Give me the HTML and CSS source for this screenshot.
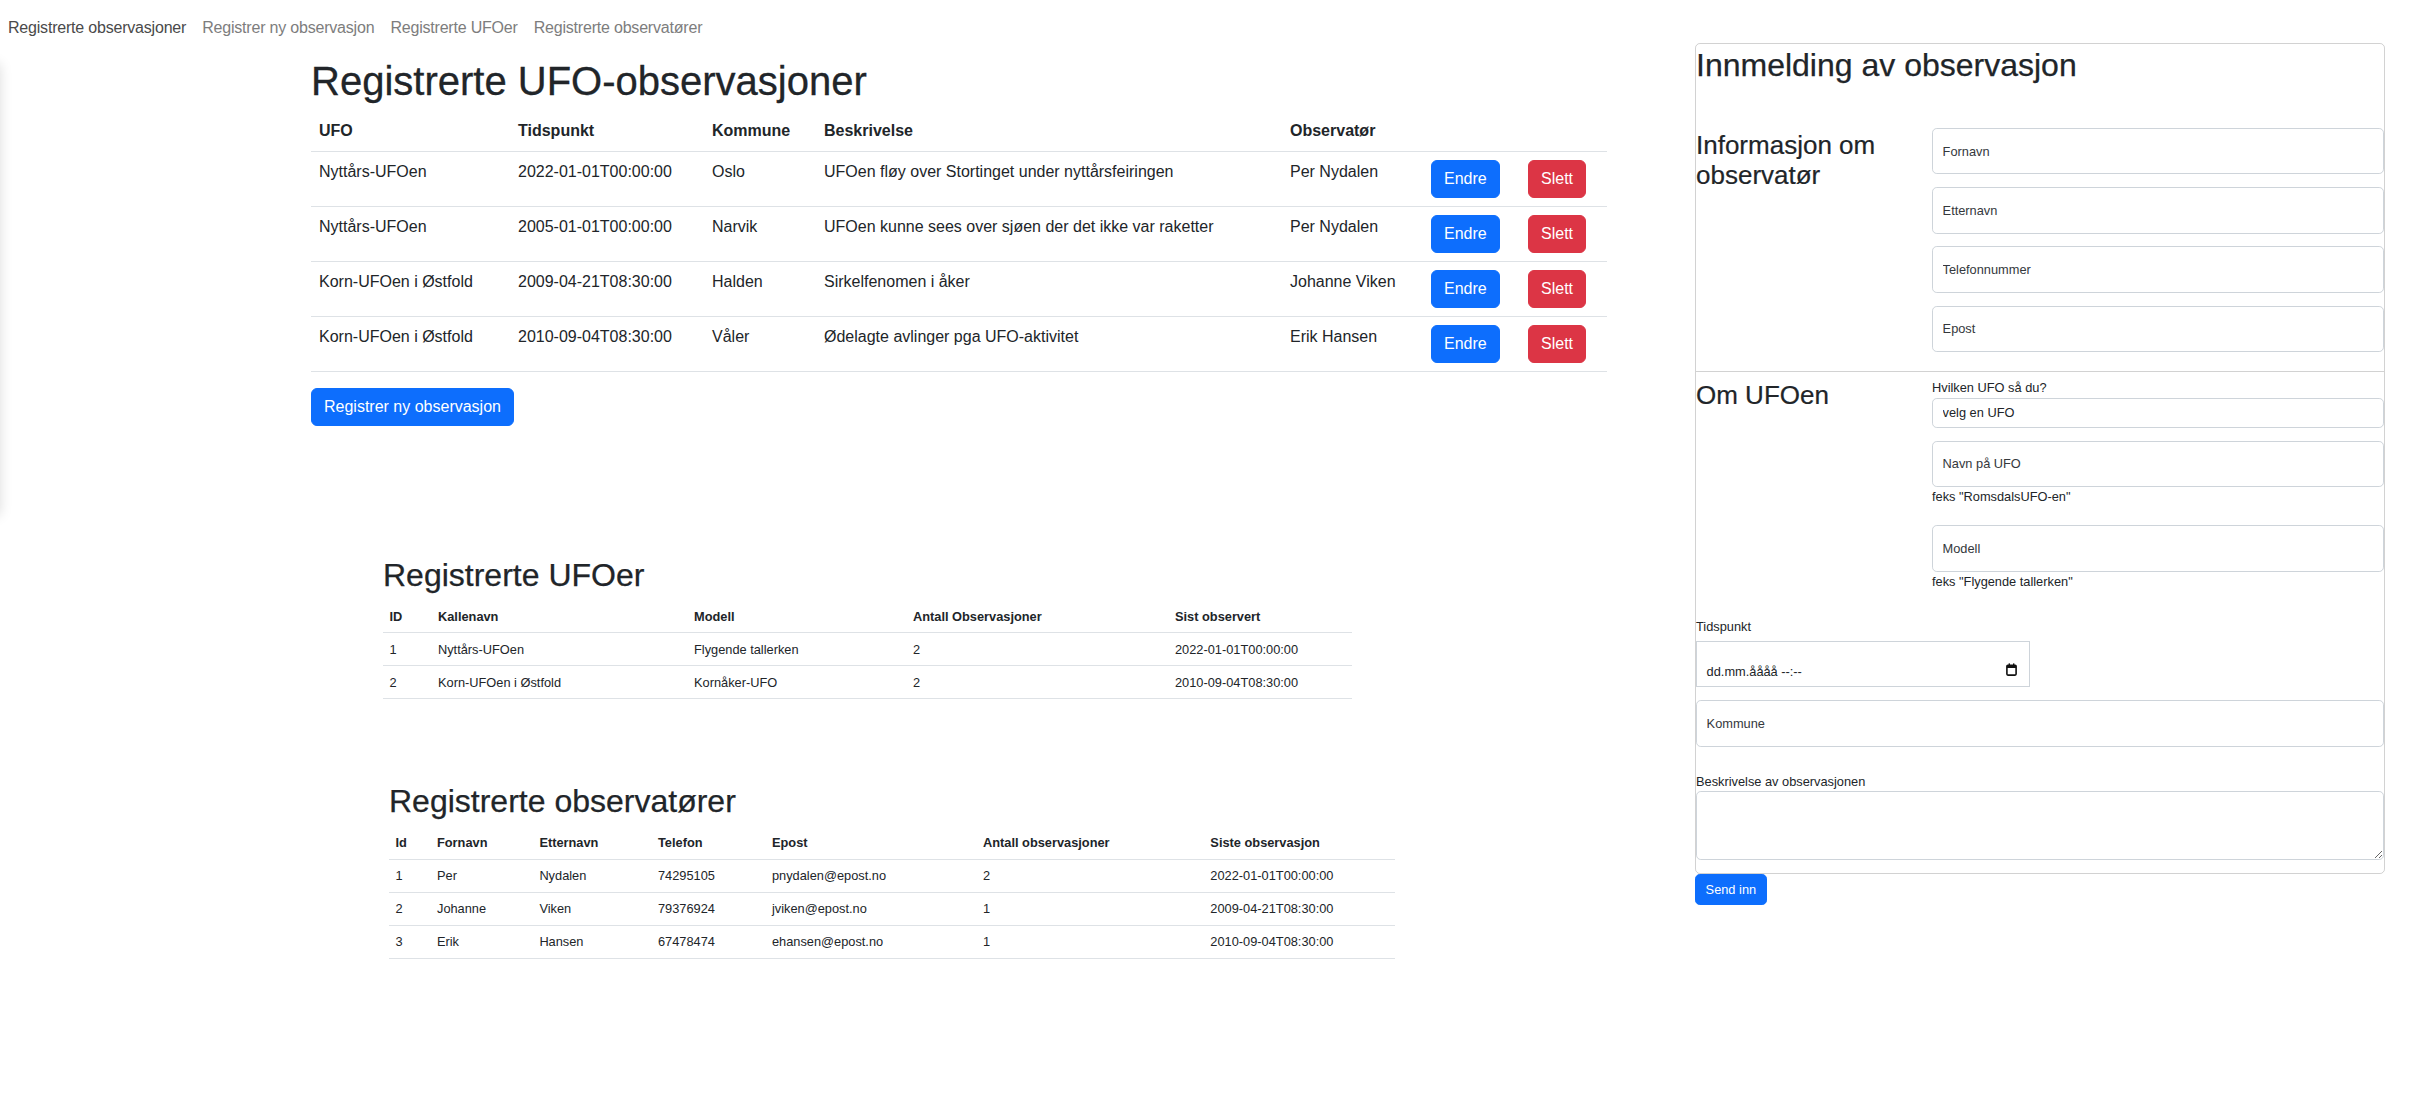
FILE: index.html
```html
<!DOCTYPE html>
<html lang="no">
<head>
<meta charset="utf-8">
<title>UFO-observasjoner</title>
<link rel="stylesheet" href="styles.css">
</head>
<body>
<div class="page">
  <div class="left-col">
    <nav class="topnav">
      <a class="navlink active" href="#">Registrerte observasjoner</a>
      <a class="navlink" href="#">Registrer ny observasjon</a>
      <a class="navlink" href="#">Registrerte UFOer</a>
      <a class="navlink" href="#">Registrerte observatører</a>
    </nav>

    <section class="main-section">
      <h1 class="main-title">Registrerte UFO-observasjoner</h1>
      <table class="obs-table">
        <colgroup>
          <col class="c-ufo"><col class="c-tid"><col class="c-kom"><col class="c-besk"><col class="c-obs"><col class="c-endre"><col class="c-slett">
        </colgroup>
        <thead>
          <tr><th>UFO</th><th>Tidspunkt</th><th>Kommune</th><th>Beskrivelse</th><th>Observatør</th><th></th><th></th></tr>
        </thead>
        <tbody>
          <tr><td>Nyttårs-UFOen</td><td>2022-01-01T00:00:00</td><td>Oslo</td><td>UFOen fløy over Stortinget under nyttårsfeiringen</td><td>Per Nydalen</td><td><button class="btn btn-primary">Endre</button></td><td><button class="btn btn-danger">Slett</button></td></tr>
          <tr><td>Nyttårs-UFOen</td><td>2005-01-01T00:00:00</td><td>Narvik</td><td>UFOen kunne sees over sjøen der det ikke var raketter</td><td>Per Nydalen</td><td><button class="btn btn-primary">Endre</button></td><td><button class="btn btn-danger">Slett</button></td></tr>
          <tr><td>Korn-UFOen i Østfold</td><td>2009-04-21T08:30:00</td><td>Halden</td><td>Sirkelfenomen i åker</td><td>Johanne Viken</td><td><button class="btn btn-primary">Endre</button></td><td><button class="btn btn-danger">Slett</button></td></tr>
          <tr><td>Korn-UFOen i Østfold</td><td>2010-09-04T08:30:00</td><td>Våler</td><td>Ødelagte avlinger pga UFO-aktivitet</td><td>Erik Hansen</td><td><button class="btn btn-primary">Endre</button></td><td><button class="btn btn-danger">Slett</button></td></tr>
        </tbody>
      </table>
      <button class="btn btn-primary">Registrer ny observasjon</button>
    </section>

    <section class="ufo-section">
      <h2 class="small-title">Registrerte UFOer</h2>
      <table class="sm-table ufo-table">
        <colgroup><col class="u1"><col class="u2"><col class="u3"><col class="u4"><col class="u5"></colgroup>
        <thead><tr><th>ID</th><th>Kallenavn</th><th>Modell</th><th>Antall Observasjoner</th><th>Sist observert</th></tr></thead>
        <tbody>
          <tr><td>1</td><td>Nyttårs-UFOen</td><td>Flygende tallerken</td><td>2</td><td>2022-01-01T00:00:00</td></tr>
          <tr><td>2</td><td>Korn-UFOen i Østfold</td><td>Kornåker-UFO</td><td>2</td><td>2010-09-04T08:30:00</td></tr>
        </tbody>
      </table>
    </section>

    <section class="observer-section">
      <h2 class="small-title">Registrerte observatører</h2>
      <table class="sm-table observer-table">
        <colgroup><col class="o1"><col class="o2"><col class="o3"><col class="o4"><col class="o5"><col class="o6"><col class="o7"></colgroup>
        <thead><tr><th>Id</th><th>Fornavn</th><th>Etternavn</th><th>Telefon</th><th>Epost</th><th>Antall observasjoner</th><th>Siste observasjon</th></tr></thead>
        <tbody>
          <tr><td>1</td><td>Per</td><td>Nydalen</td><td>74295105</td><td>pnydalen@epost.no</td><td>2</td><td>2022-01-01T00:00:00</td></tr>
          <tr><td>2</td><td>Johanne</td><td>Viken</td><td>79376924</td><td>jviken@epost.no</td><td>1</td><td>2009-04-21T08:30:00</td></tr>
          <tr><td>3</td><td>Erik</td><td>Hansen</td><td>67478474</td><td>ehansen@epost.no</td><td>1</td><td>2010-09-04T08:30:00</td></tr>
        </tbody>
      </table>
    </section>
  </div>

  <div class="form-col">
    <form class="form-card">
      <h1 class="form-title">Innmelding av observasjon</h1>
      <div class="form-row first-row">
        <h2 class="subhead">Informasjon om observatør</h2>
        <div class="field-col">
          <input class="float-input" type="text" placeholder="Fornavn">
          <input class="float-input" type="text" placeholder="Etternavn">
          <input class="float-input" type="text" placeholder="Telefonnummer">
          <input class="float-input" type="text" placeholder="Epost">
        </div>
      </div>
      <div class="form-row ufo-row">
        <h2 class="subhead ufo-head">Om UFOen</h2>
        <div class="field-col ufo-fields">
          <label class="form-label">Hvilken UFO så du?</label>
          <select class="ufo-select"><option>velg en UFO</option></select>
          <input class="float-input no-mb" type="text" placeholder="Navn på UFO">
          <div class="form-text gap-after">feks "RomsdalsUFO-en"</div>
          <input class="float-input no-mb" type="text" placeholder="Modell">
          <div class="form-text">feks "Flygende tallerken"</div>
        </div>
      </div>
      <label class="form-label tid-label">Tidspunkt</label>
      <div class="date-input">
        <span>dd.mm.åååå --:--</span>
        <svg class="cal-icon" width="11" height="13" viewBox="0 0 11 13" aria-hidden="true">
          <rect x="0.9" y="2.2" width="9.2" height="9.9" rx="1" fill="none" stroke="#111" stroke-width="1.6"/>
          <rect x="0.9" y="2.2" width="9.2" height="2.8" fill="#111"/>
          <rect x="2.6" y="0.4" width="1.4" height="2.4" fill="#111"/>
          <rect x="7" y="0.4" width="1.4" height="2.4" fill="#111"/>
        </svg>
      </div>
      <input class="float-input kommune" type="text" placeholder="Kommune">
      <label class="form-label besk-label">Beskrivelse av observasjonen</label>
      <textarea class="besk-area"></textarea>
    </form>
    <button class="btn-send" type="button">Send inn</button>
  </div>
</div>
</body>
</html>
```

FILE: styles.css
```css
* { box-sizing: border-box; }

html, body {
  margin: 0;
  padding: 0;
  background: #fff;
}

body {
  font-family: "Liberation Sans", Arial, sans-serif;
  font-size: 16px;
  line-height: 1.5;
  color: #212529;
}

.page {
  display: flex;
  align-items: flex-start;
}

.left-col {
  flex: 1 1 auto;
  min-width: 0;
}

/* navigation */
.topnav {
  display: flex;
  padding: 8px 0;
}

.navlink {
  padding: 8px 8px;
  line-height: 24px;
  color: #7d7d7d;
  text-decoration: none;
  font-size: 16px;
  letter-spacing: -0.2px;
}

.navlink.active {
  color: #4a4a4a;
}

/* main observations section */
.main-section {
  position: relative;
  padding: 1px 0 89px 311px;
}

.main-section::before {
  content: "";
  position: absolute;
  left: -200px;
  top: 8px;
  bottom: 0;
  width: 200px;
  box-shadow: 0 0 12px rgba(0, 0, 0, 0.14);
}

.main-title {
  font-size: 40px;
  line-height: 48px;
  font-weight: 500;
  margin: 0 0 6px;
  -webkit-text-stroke: 0.3px currentColor;
}

.obs-table {
  width: 1296px;
  table-layout: fixed;
  border-collapse: collapse;
  margin-bottom: 16px;
}

.obs-table th,
.obs-table td {
  padding: 8px;
  text-align: left;
  vertical-align: top;
  border-bottom: 1px solid #dee2e6;
  line-height: 24px;
  white-space: nowrap;
}

.obs-table th { font-weight: 700; }

.c-ufo { width: 199px; }
.c-tid { width: 194px; }
.c-kom { width: 112px; }
.c-besk { width: 466px; }
.c-obs { width: 141px; }
.c-endre { width: 97px; }
.c-slett { width: 87px; }

.btn {
  display: inline-block;
  font-family: inherit;
  font-size: 16px;
  line-height: 24px;
  padding: 6px 12px;
  border: 1px solid transparent;
  border-radius: 6px;
  color: #fff;
  cursor: pointer;
  vertical-align: top;
}

.btn-primary { background: #0d6efd; border-color: #0d6efd; }
.btn-danger { background: #dc3545; border-color: #dc3545; }

/* smaller tables */
.small-title {
  font-size: 32px;
  line-height: 38.4px;
  font-weight: 500;
  margin: 0 0 6.4px;
  -webkit-text-stroke: 0.25px currentColor;
}

.ufo-section {
  margin: 40.6px 0 0 383px;
}

.observer-section {
  margin: 82.6px 0 0 389px;
}

.sm-table {
  table-layout: fixed;
  border-collapse: collapse;
  font-size: 12.8px;
  margin-bottom: 12.8px;
}

.sm-table th,
.sm-table td {
  padding: 6.4px;
  line-height: 19.2px;
  text-align: left;
  vertical-align: top;
  border-bottom: 1px solid #dee2e6;
  white-space: nowrap;
}

.sm-table th { font-weight: 700; }

.ufo-table { width: 969px; }
.u1 { width: 48.6px; }
.u2 { width: 256px; }
.u3 { width: 219px; }
.u4 { width: 262px; }
.u5 { width: 183.4px; }

.observer-table { width: 1006px; }
.o1 { width: 41.6px; }
.o2 { width: 102.4px; }
.o3 { width: 118.6px; }
.o4 { width: 114px; }
.o5 { width: 211px; }
.o6 { width: 227.4px; }
.o7 { width: 191px; }

/* form column */
.form-col {
  flex: 0 0 690px;
  width: 690px;
  margin: 43px 27px 0 0;
}

.form-card {
  border: 1px solid rgba(0, 0, 0, 0.175);
  border-radius: 5px;
  font-size: 12.8px;
  line-height: 19.2px;
  padding-bottom: 12.8px;
}

.form-title {
  font-size: 32px;
  line-height: 38.4px;
  font-weight: 500;
  margin: 2.4px 0 0;
  -webkit-text-stroke: 0.25px currentColor;
}

.form-row {
  display: grid;
  grid-template-columns: 236px 1fr;
}

.first-row {
  margin-top: 43.2px;
}

.subhead {
  font-size: 26px;
  line-height: 30.7px;
  font-weight: 500;
  margin: 1.6px 0 0;
  -webkit-text-stroke: 0.2px currentColor;
}

.field-col {
  display: flex;
  flex-direction: column;
}

.float-input {
  display: block;
  width: 100%;
  height: 46.4px;
  border: 1px solid #ced4da;
  border-radius: 4.8px;
  padding: 0 9.6px;
  margin: 0 0 12.8px;
  font-family: inherit;
  font-size: 12.8px;
  color: #212529;
  background: #fff;
}

.float-input::placeholder {
  color: #34383c;
  opacity: 1;
}

.float-input.no-mb { margin-bottom: 0; }

.ufo-row {
  margin-top: 6.2px;
  border-top: 1px solid rgba(0, 0, 0, 0.175);
}

.subhead.ufo-head {
  margin-top: 7.6px;
}

.ufo-fields {
  padding-top: 6.4px;
}

.form-label {
  display: block;
  line-height: 19.2px;
}

.ufo-select {
  display: block;
  width: 100%;
  height: 30.4px;
  border: 1px solid #ced4da;
  border-radius: 4.8px;
  padding: 0 9.6px;
  margin: 0 0 12.8px;
  font-family: inherit;
  font-size: 12.8px;
  color: #212529;
  background: #fff;
  appearance: none;
  -webkit-appearance: none;
}

.form-text {
  line-height: 19.2px;
}

.form-text.gap-after {
  margin-bottom: 19.2px;
}

.tid-label {
  margin-top: 26.2px;
}

.date-input {
  width: 334px;
  height: 46px;
  margin: 5px 0 12.8px;
  border: 1px solid #ced4da;
  border-radius: 0;
  padding: 14px 12px 0 9.6px;
  display: flex;
  align-items: center;
  justify-content: space-between;
  color: #212529;
}

.cal-icon {
  display: block;
  margin-top: -3px;
}

.kommune {
  margin-bottom: 25.2px;
}

.besk-area {
  display: block;
  width: 100%;
  height: 69px;
  border: 1px solid #ced4da;
  border-radius: 4.8px;
  padding: 5px 9.6px;
  font-family: inherit;
  font-size: 12.8px;
  margin: 0;
  resize: vertical;
}

.btn-send {
  display: inline-block;
  font-family: inherit;
  font-size: 12.8px;
  line-height: 19.2px;
  padding: 4.8px 9.6px;
  border: 1px solid #0d6efd;
  border-radius: 4.8px;
  background: #0d6efd;
  color: #fff;
  cursor: pointer;
}
```
